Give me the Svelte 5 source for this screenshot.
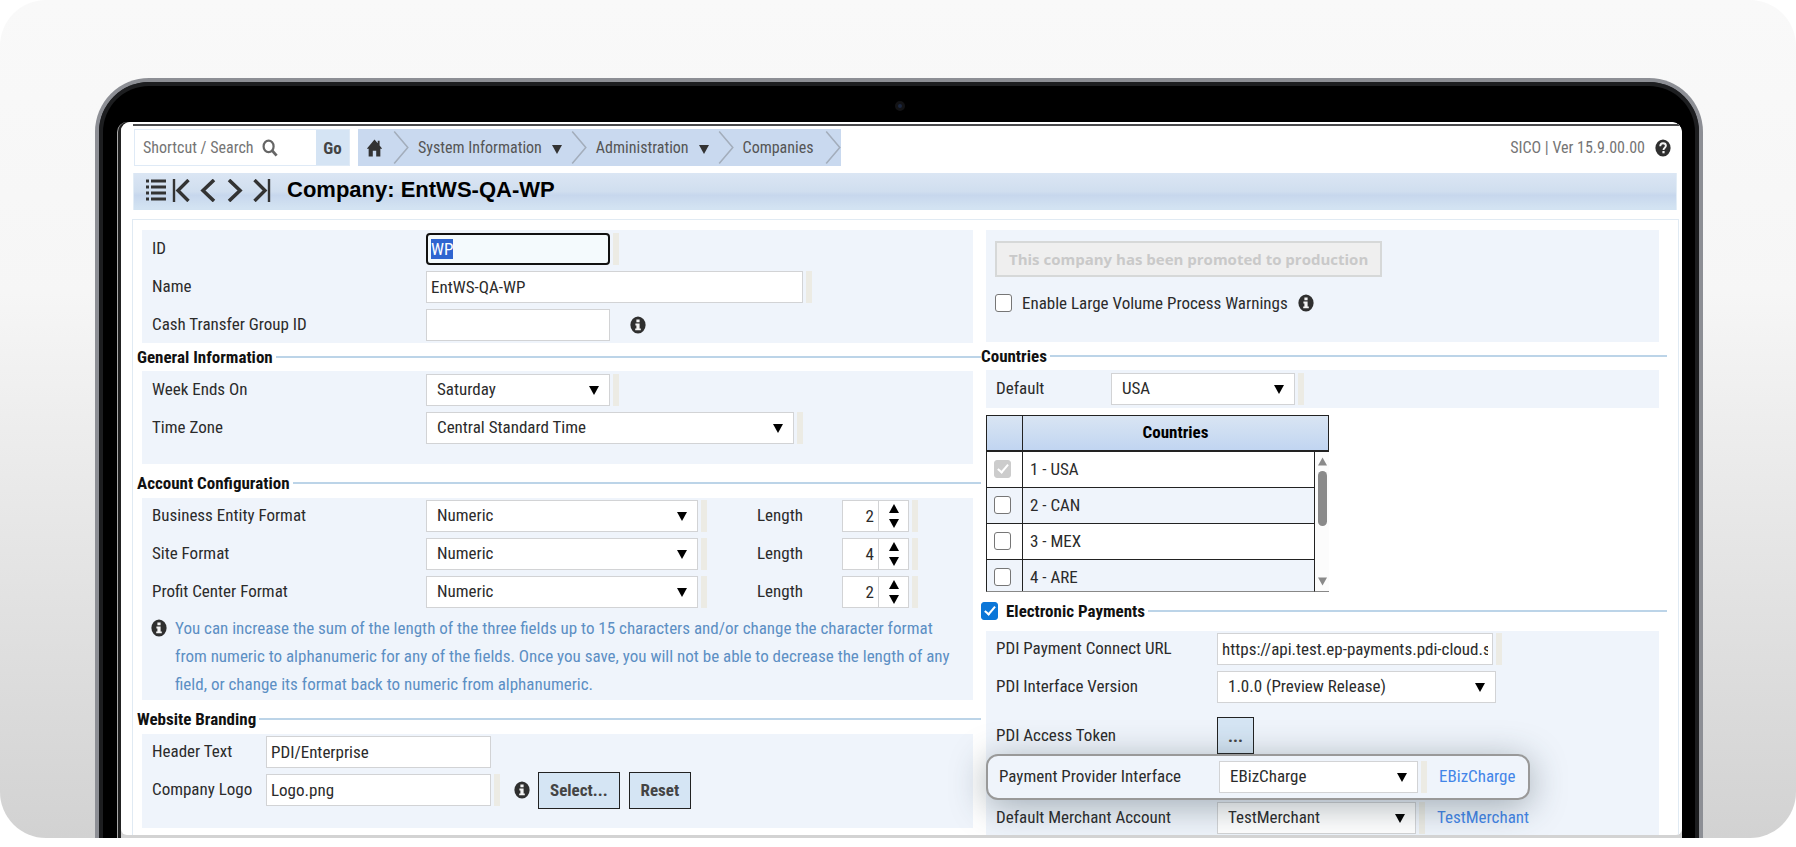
<script>
  import { onMount } from 'svelte';

  let idInput;
  let electronic = $state(true);

  const formats = $state([
    { id: 'entity', label: 'Business Entity Format', length: 2 },
    { id: 'site', label: 'Site Format', length: 4 },
    { id: 'profit', label: 'Profit Center Format', length: 2 }
  ]);

  const countries = $state([
    { name: '1 - USA', checked: true, locked: true },
    { name: '2 - CAN', checked: false, locked: false },
    { name: '3 - MEX', checked: false, locked: false },
    { name: '4 - ARE', checked: false, locked: false }
  ]);

  onMount(() => {
    idInput.focus();
    idInput.select();
  });
</script>

{#snippet info()}
  <svg class="info" viewBox="0 0 16 18" role="img" aria-label="Information">
    <ellipse cx="8" cy="9" rx="7.6" ry="8.6" fill="#2f2f2f" />
    <path d="M6.4 3.6h3.2v2.6H6.4zM5.4 7.6h4.2v4.8h1.2v1.8H5.2v-1.8h1.2V9.4h-1z" fill="#f3f3f3" />
  </svg>
{/snippet}

{#snippet chevron()}
  <svg class="chev" viewBox="0 0 16 36" aria-hidden="true">
    <path d="M1 1.5 15 18 1 34.5" fill="none" stroke="#a3adbb" stroke-width="1.6" />
  </svg>
{/snippet}

{#snippet select(id, value, size)}
  <span class="select {size}">
    <select {id}><option>{value}</option></select>
    <svg viewBox="0 0 10 9" aria-hidden="true"><path d="M0 0h10L5 9z" fill="#000" /></svg>
  </span>
{/snippet}

<div class="card">
  <div class="laptop">
    <div class="bezel">
      <div class="camera"><span></span></div>
      <div class="edge">
        <div class="glass">
          <main class="screen">
            <div class="rule"></div>

            <header class="top">
              <form class="search" onsubmit={(e) => e.preventDefault()}>
                <label for="shortcut">Shortcut / Search
                  <svg viewBox="0 0 16 18" aria-hidden="true">
                    <ellipse cx="6.6" cy="7.4" rx="5" ry="5.8" fill="none" stroke="#666" stroke-width="2.2" />
                    <path d="M10.2 11.6 14.6 16.6" stroke="#666" stroke-width="2.8" />
                  </svg>
                </label>
                <input id="shortcut" type="text" />
                <button>Go</button>
              </form>
              <nav class="crumbs" aria-label="Breadcrumb">
                <a class="home" href="#home" aria-label="Home">
                  <svg viewBox="0 0 18 20" aria-hidden="true">
                    <path d="M9 1 .8 10.8h2V19h4.4v-6.2h3.6V19h4.4v-8.2h2L14.4 7.400V2.400h-2v2.700z" fill="#333" />
                  </svg>
                </a>
                {@render chevron()}
                <a href="#system">System Information
                  <svg class="drop" viewBox="0 0 10 9" aria-hidden="true"><path d="M0 0h10L5 9z" fill="#333" /></svg>
                </a>
                {@render chevron()}
                <a href="#administration">Administration
                  <svg class="drop" viewBox="0 0 10 9" aria-hidden="true"><path d="M0 0h10L5 9z" fill="#333" /></svg>
                </a>
                {@render chevron()}
                <a class="last" href="#companies">Companies</a>
                {@render chevron()}
              </nav>
              <div class="version">
                SICO | Ver 15.9.00.00
                <svg class="info" viewBox="0 0 16 18" role="img" aria-label="Help">
                  <ellipse cx="8" cy="9" rx="7.600" ry="8.600" fill="#2f2f2f" />
                  <path d="M5.200 7.200C5.300 5 6.400 4.300 8 4.300s2.900.9 2.900 2.500c0 1.900-2.400 1.900-2.400 4.100" fill="none" stroke="#f3f3f3" stroke-width="1.900" />
                  <rect x="7.400" y="12" width="2.200" height="2.300" fill="#f3f3f3" />
                </svg>
              </div>
            </header>

            <div class="title">
              <button aria-label="List">
                <svg width="20" height="22" viewBox="0 0 20 22" stroke="#333" stroke-width="2.800">
                  <path d="M0 2h3M0 8h3M0 14h3M0 20h3M5 2h15M5 8h15M5 14h15M5 20h15" />
                </svg>
              </button>
              <button aria-label="First">
                <svg width="18" height="23" viewBox="0 0 18 23" fill="none" stroke="#333">
                  <path d="M2 0v23" stroke-width="2.400" /><path d="M16.500 1 6 11.500 16.500 22" stroke-width="3.400" />
                </svg>
              </button>
              <button aria-label="Previous">
                <svg width="18" height="23" viewBox="0 0 18 23" fill="none" stroke="#333" stroke-width="3.600"><path d="M15 1 4 11.500 15 22" /></svg>
              </button>
              <button aria-label="Next">
                <svg width="18" height="23" viewBox="0 0 18 23" fill="none" stroke="#333" stroke-width="3.600"><path d="M3 1l11 10.500L3 22" /></svg>
              </button>
              <button aria-label="Last">
                <svg width="18" height="23" viewBox="0 0 18 23" fill="none" stroke="#333">
                  <path d="M1.500 1 12 11.500 1.500 22" stroke-width="3.400" /><path d="M16 0v23" stroke-width="2.400" />
                </svg>
              </button>
              <h1>Company: EntWS-QA-WP</h1>
            </div>

            <div class="content">
              <div class="column">
                <section class="block identity">
                  <div class="row">
                    <label for="cid">ID</label>
                    <span class="req"><input id="cid" class="w-s focused" type="text" value="WP" bind:this={idInput} /></span>
                  </div>
                  <div class="row">
                    <label for="cname">Name</label>
                    <span class="req"><input id="cname" class="w-l" type="text" value="EntWS-QA-WP" /></span>
                  </div>
                  <div class="row">
                    <label for="cgroup">Cash Transfer Group ID</label>
                    <input id="cgroup" class="w-s" type="text" />
                    {@render info()}
                  </div>
                </section>

                <h2>General Information</h2>
                <section class="block general">
                  <div class="row">
                    <label for="week">Week Ends On</label>
                    <span class="req">{@render select('week', 'Saturday', 'w-s')}</span>
                  </div>
                  <div class="row">
                    <label for="zone">Time Zone</label>
                    <span class="req">{@render select('zone', 'Central Standard Time', 'w-zone')}</span>
                  </div>
                </section>

                <h2 class="spaced">Account Configuration</h2>
                <section class="block">
                  {#each formats as f (f.id)}
                    <div class="row">
                      <label for={f.id}>{f.label}</label>
                      <span class="req">{@render select(f.id, 'Numeric', 'w-m')}</span>
                      <label class="len" for="{f.id}-length">Length</label>
                      <span class="req">
                        <span class="spin">
                          <input id="{f.id}-length" type="text" inputmode="numeric" bind:value={f.length} />
                          <span class="steps">
                            <button aria-label="Increase {f.label} length" onclick={() => (f.length = +f.length + 1)}>
                              <svg viewBox="0 0 10 9"><path d="M0 9h10L5 0z" /></svg>
                            </button>
                            <button aria-label="Decrease {f.label} length" onclick={() => (f.length = Math.max(1, f.length - 1))}>
                              <svg viewBox="0 0 10 9"><path d="M0 0h10L5 9z" /></svg>
                            </button>
                          </span>
                        </span>
                      </span>
                    </div>
                  {/each}
                  <div class="note">
                    {@render info()}
                    <p>You can increase the sum of the length of the three fields up to 15 characters and/or change the character format from numeric to alphanumeric for any of the fields. Once you save, you will not be able to decrease the length of any field, or change its format back to numeric from alphanumeric.</p>
                  </div>
                </section>

                <h2 class="spaced">Website Branding</h2>
                <section class="block branding">
                  <div class="row">
                    <label for="header-text">Header Text</label>
                    <input id="header-text" type="text" value="PDI/Enterprise" />
                  </div>
                  <div class="row">
                    <label for="logo">Company Logo</label>
                    <span class="req"><input id="logo" type="text" value="Logo.png" /></span>
                    {@render info()}
                    <button class="action">Select...</button>
                    <button class="action">Reset</button>
                  </div>
                </section>
              </div>

              <div class="column">
                <section class="block status">
                  <button class="promoted" disabled>This company has been promoted to production</button>
                  <div class="check-row">
                    <input id="warn" type="checkbox" />
                    <label for="warn">Enable Large Volume Process Warnings</label>
                    {@render info()}
                  </div>
                </section>

                <h2>Countries</h2>
                <section class="block default">
                  <div class="row">
                    <label for="default-country">Default</label>
                    <span class="req">{@render select('default-country', 'USA', 'w-s')}</span>
                  </div>
                </section>

                <div class="country-list">
                  <table>
                    <thead>
                      <tr><th aria-label="Selected"></th><th>Countries</th></tr>
                    </thead>
                    <tbody>
                      {#each countries as c}
                        <tr>
                          <td><input type="checkbox" aria-label={c.name} bind:checked={c.checked} disabled={c.locked} /></td>
                          <td>{c.name}</td>
                        </tr>
                      {/each}
                    </tbody>
                  </table>
                  <div class="scroll" aria-hidden="true">
                    <svg viewBox="0 0 10 9"><path d="M.5 8.500h9L5 .5z" /></svg>
                    <span></span>
                    <svg viewBox="0 0 10 9"><path d="M.5 .5h9L5 8.500z" /></svg>
                  </div>
                </div>

                <h2 class="spaced payments">
                  <input id="electronic" type="checkbox" bind:checked={electronic} />
                  <label for="electronic">Electronic Payments</label>
                </h2>
                <section class="block pay">
                  <div class="row">
                    <label for="url">PDI Payment Connect URL</label>
                    <span class="req"><input id="url" type="text" value="https://api.test.ep-payments.pdi-cloud.services" /></span>
                  </div>
                  <div class="row">
                    <label for="ver">PDI Interface Version</label>
                    {@render select('ver', '1.0.0 (Preview Release)', 'w-ver')}
                  </div>
                  <div class="row token">
                    <label for="token">PDI Access Token</label>
                    <button id="token" class="action dots">...</button>
                  </div>
                  <div class="row provider">
                    <label for="provider">Payment Provider Interface</label>
                    <span class="req">{@render select('provider', 'EBizCharge', 'w-pay')}</span>
                    <a href="#ebizcharge">EBizCharge</a>
                  </div>
                  <div class="row merchant">
                    <label for="merchant">Default Merchant Account</label>
                    <span class="req">{@render select('merchant', 'TestMerchant', 'w-pay')}</span>
                    <a href="#testmerchant">TestMerchant</a>
                  </div>
                </section>
              </div>
            </div>
          </main>
        </div>
      </div>
    </div>
  </div>
</div>

<style>
  :global(body) { margin: 0; background: #fff; }

  .card {
    box-sizing: border-box;
    margin-bottom: 9px;
    padding: 78px 93px 0 95px;
    border-radius: 46px;
    overflow: hidden;
    background: linear-gradient(#f9f9f9, #f6f6f6 35%, #d2d2d2);
    font: 17px/22px "Roboto Condensed", Roboto, "Noto Sans", sans-serif;
    color: #2b2b2b;
  }
  .card :is(input, select, button) { font: inherit; color: inherit; margin: 0; box-sizing: border-box; }

  .laptop { border: 4px solid #8d8f95; border-bottom: 0; border-radius: 54px 54px 0 0; background: #1d1e20; }
  .bezel { border: 4px solid #1d1e20; border-bottom: 0; border-radius: 50px 50px 0 0; background: #000; padding: 0 13px 0 14px; }
  .camera { height: 36px; display: grid; place-items: center; padding-top: 4px; box-sizing: border-box; }
  .camera span { width: 4px; height: 4px; border-radius: 50%; background: #1b2740; border: 3px solid #131315; }
  .edge { border-left: 1px solid #a9a9a9; padding-left: 3px; background: #222; border-radius: 10px 10px 0 0; overflow: hidden; }
  .glass { background: #d3d3d3; padding-bottom: 3px; border-radius: 9px 9px 0 0; overflow: hidden; }
  .screen { background: #fff; border-radius: 0 0 6px 6px; overflow: hidden; }

  .rule { margin: 2px 0 3px 12px; height: 2px; background: #4a4a4c; }

  .top { display: flex; align-items: center; margin: 0 11px 0 13px; height: 37px; font-size: 16px; }
  .search { display: flex; align-items: center; width: 216px; height: 37px; box-sizing: border-box; border: 1px solid #dfeaf6; }
  .search label { display: flex; align-items: center; gap: 8px; padding-left: 8px; color: #757575; white-space: nowrap; }
  .search label svg { width: 16px; height: 18px; }
  .search input { flex: 1; min-width: 0; border: 0; padding: 0; outline: 0; background: none; }
  .card .search button { align-self: stretch; width: 33px; padding: 0; border: 0; background: #d5e4f4; font-size: 17px; font-weight: bold; color: #444; }
  .crumbs { display: flex; align-items: center; height: 37px; margin-left: 8px; background: #c9d9ef; }
  .crumbs a { display: flex; align-items: center; gap: 10px; padding: 0 9px; color: #555; text-decoration: none; }
  .crumbs .last { padding-right: 11px; }
  .crumbs .home { padding: 0 10px 0 8px; }
  .crumbs .home svg { width: 17px; height: 20px; }
  .crumbs .drop { width: 10px; height: 9px; margin-top: 4px; }
  .chev { width: 16px; height: 35px; }
  .version { display: flex; align-items: center; gap: 10px; margin-left: auto; color: #757575; }

  .info { width: 16px; height: 18px; flex: none; }

  .title {
    display: flex; align-items: center; height: 34px; margin: 7px 5px 0 12px; padding: 0 12px 3px;
    border: solid #e3edf6; border-width: 0 1px;
    background: linear-gradient(#dbe6f4, #d0deef 50%, #c7d7ed 60%, #d3e3f2 95%);
  }
  .title button { border: 0; padding: 0; margin-right: 9px; background: none; height: 23px; display: flex; }
  .title button:nth-child(1) { margin-right: 6px; }
  .title h1 { margin: 0 0 0 7px; font: bold 22px/28px "Liberation Sans", Arial, sans-serif; color: #000; }

  .content {
    display: grid; grid-template-columns: 844fr 686fr;
    margin: 9px 3px 0 11px; padding: 10px 11px 0 4px;
    border: 1px solid #e0eaf3; border-bottom: 0;
  }
  .column { min-width: 0; }
  .block { margin: 0 8px 0 5px; padding: 2px 0 0 10px; background: #eff4fb; }
  h2 { display: flex; align-items: center; height: 28px; margin: 0; font: inherit; font-weight: bold; color: #111; }
  h2::after { content: ""; flex: 1; height: 2px; margin-left: 3px; background: #bcd4e8; }
  h2.spaced { margin: 5px 0 1px; }
  h2.payments { margin-bottom: 6px; }
  h2.payments label { margin-left: 8px; }

  .row { display: flex; align-items: center; height: 32px; }
  .row + .row { margin-top: 6px; }
  .row > label { padding-bottom: 2px; }
  .row > label:first-child { flex: none; width: 274px; }
  .row input, .row select { height: 32px; border: 1px solid #d2d3d5; border-radius: 0; background: #fff; padding: 0 4px 1px; outline: 0; }
  .req { display: flex; gap: 3px; flex: none; }
  .req::after { content: ""; width: 6px; background: #ecebe4; }
  .row > .info { margin-left: 20px; }

  .w-s { width: 184px; }
  .w-m { width: 272px; }
  .w-l { width: 377px; }
  .w-zone { width: 368px; }
  .w-ver { width: 279px; }
  .w-pay { width: 199px; }

  .select { display: grid; grid-template-columns: 1fr 21px; align-items: center; }
  .select select { grid-area: 1 / 1 / 2 / 3; width: 100%; padding: 0 10px 2px; appearance: none; }
  .select svg { grid-area: 1 / 2; width: 10px; height: 9px; pointer-events: none; }

  .row input.focused { border: 2px solid #111; border-radius: 4px; padding: 0 3px; background: #f4fafd; }
  .focused::selection { background: #2f65d0; color: #fff; }

  .identity { padding: 3px 0 2px 10px; }
  .general { padding: 3px 0 20px 10px; }

  .len { width: 85px; margin-left: 50px; }
  .spin { display: flex; width: 67px; }
  .spin input { width: 37px; text-align: right; }
  .steps { display: flex; flex-direction: column; align-items: center; justify-content: center; gap: 6px; flex: 1; background: #fff; border: 1px solid #d2d3d5; border-left: 0; }
  .steps button { display: flex; padding: 0; border: 0; background: none; }
  .steps svg { width: 10px; height: 9px; }

  .note { display: flex; gap: 8px; padding: 6px 0 2px; margin-right: 22px; }
  .note .info { margin: 5px 0 0 -1px; }
  .note p { margin: 0; line-height: 28px; color: #5c8fc4; }

  .branding { padding: 2px 0 22px 10px; margin-bottom: 7px; }
  .branding .row > label { width: 114px; }
  .branding input { width: 225px; }
  .branding .info { margin: 0 8px 0 14px; }
  .card .action { height: 37px; padding: 0 11px; border: 1px solid #222; background: #d5e5f4; font-weight: bold; color: #444; }
  .action + .action { margin-left: 9px; }

  .status { padding: 11px 0 29px 9px; }
  .card .promoted { display: block; height: 36px; padding: 0 12px; border: 2px solid #d6d8d8; background: #efefef; color: #c9c9c9; font: bold 15px "Open Sans", sans-serif; }
  .check-row { display: flex; align-items: center; margin-top: 16px; height: 20px; }
  .check-row label { margin: 0 10px; }

  .default { padding: 3px 0 3px 10px; }
  .default .row > label { width: 115px; }

  input[type="checkbox"] {
    appearance: none; flex: none; display: grid; place-items: center;
    width: 17px; height: 18px; border: 1px solid #767676; border-radius: 3px; background: #fff;
  }
  input[type="checkbox"]:checked { border-color: #0b76d8; background: #0b76d8; }
  input[type="checkbox"]:disabled { border-color: #ccc; background: #ccc; }
  input[type="checkbox"]:checked::before {
    content: ""; width: 4px; height: 9px; margin-top: -3px;
    border: solid #fff; border-width: 0 2px 2px 0; transform: rotate(40deg);
  }

  .country-list { display: grid; grid-template-columns: 328px 15px; margin: 7px 0 0 5px; width: 343px; }
  table { grid-area: 1 / 1 / 2 / 3; display: block; border-spacing: 0; }
  thead, tbody { display: block; }
  tr { display: grid; grid-template-columns: 36px 1fr; }
  thead tr { height: 37px; box-sizing: border-box; border: 1px solid #222; border-bottom-width: 2px; background: linear-gradient(#d9e5f3, #c1d5f1); }
  th { padding: 0; line-height: 32px; border-right: 1px solid #222; color: #000; box-sizing: border-box; }
  th:last-child { border-right: 0; }
  tbody { height: 140px; width: 329px; overflow: auto; scrollbar-width: none; box-sizing: border-box; border-left: 1px solid #222; border-right: 1px solid #222; border-bottom: 1px solid #888; }
  tbody tr { height: 36px; box-sizing: border-box; border-bottom: 1px solid #222; }
  tbody tr:nth-child(even) { background: #eff4fb; }
  td { display: flex; align-items: center; padding: 0 7px 1px; box-sizing: border-box; border-right: 1px solid #222; }
  td:last-child { border-right: 0; }
  .scroll { grid-area: 1 / 2; align-self: end; margin-left: 1px; height: 140px; display: flex; flex-direction: column; align-items: center; box-sizing: border-box; padding: 5px 0; border-bottom: 1px solid #888; background: #fcfcfc; }
  .scroll svg { width: 11px; height: 9px; fill: #8a8a8a; }
  .scroll span { width: 9px; height: 55px; margin: 5px 0 auto; border-radius: 5px; background: #8a8a8a; }

  .pay { padding-bottom: 1px; }
  .pay .row > label { width: 221px; }
  .pay a { margin-left: 12px; padding-bottom: 2px; color: #4285e8; text-decoration: none; }
  .pay #url { width: 276px; }
  .pay .token { height: 37px; margin-top: 14px; }
  .pay .dots { width: 37px; padding: 0; }
  .pay .provider {
    position: relative; box-sizing: border-box; width: fit-content; height: 46px; margin: 0 0 0 -10px; padding: 0 13px 0 11px;
    border: 2px solid #999; border-radius: 12px; background: #eff4fb;
    box-shadow: 0 6px 36px rgba(40, 60, 70, 0.4);
  }
  .pay .provider label { width: 220px; }
  .pay .merchant { margin-top: 2px; }
</style>
